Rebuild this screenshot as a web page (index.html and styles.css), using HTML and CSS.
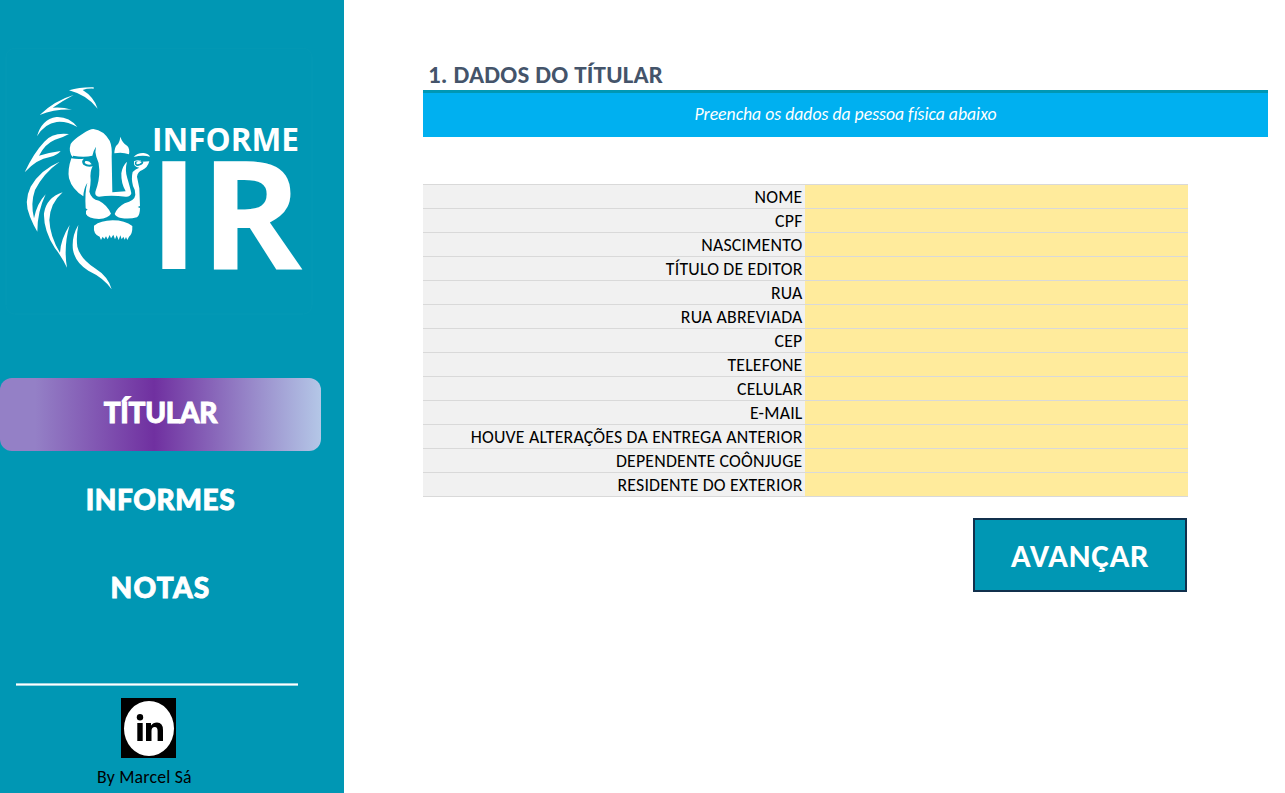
FILE: index.html
```html
<!DOCTYPE html>
<html lang="pt-BR">
<head>
<meta charset="utf-8">
<title>Informe IR</title>
<link rel="stylesheet" href="styles.css">
</head>
<body>
<div class="app">
  <aside class="sidebar">
    <svg class="logo" viewBox="0 0 1032 870" role="img" aria-label="Informe IR">
      <rect class="logo-frame" x="18" y="25" width="918" height="797" rx="26"/>
      <g class="mane">
        <path d="M207 151Q240 141 281 142V146Q262 145 248 150Q281 170 293 206Q261 165 207 151Z"/>
        <path d="M221 165Q165 181 119 225Q165 207 216 209Q185 200 158 203Q185 184 221 165Z"/>
        <path d="M111 289Q125 238 169 231Q207 229 232 261Q200 243 170 246Q135 250 111 289Z"/>
        <path d="M207 282Q157 276 133 305Q100 340 74 397Q110 357 150 351Q172 345 182 333Q145 338 117 347Q135 311 165 299Q190 292 207 282Z"/>
        <path d="M179 365Q120 390 92 440Q70 485 90 530Q100 555 112 575Q112 515 137 463Q111 490 102 535Q91 490 105 450Q130 400 179 365Z"/>
        <path d="M188 457Q139 473 132 520Q130 570 165 625Q185 650 201 683Q190 620 209 555Q182 598 180 638Q150 590 148 540Q150 490 188 457Z"/>
        <path d="M235 555Q214 590 219 630Q226 668 265 692Q312 714 335 748Q325 710 285 685Q240 655 232 620Q228 590 235 555Z"/>
      </g>
      <g class="face" transform="translate(192 240)">
        <path d="M27 112Q12 97 20 72Q28 59 55 42Q77 27 88 27Q119 31 137 62Q145 80 143 110L145 217L185 214Q171 190 172 160Q175 138 189 125Q182 150 190 175Q199 205 202 220Q199 231 185 230Q140 225 105 230Q92 229 94 216Q107 180 106 150Q107 130 97 110Q92 95 96 80Q88 92 85 107Q60 113 27 107Z"/>
        <path d="M22 115Q40 118 60 116Q50 122 58 134Q70 143 86 139Q77 155 80 180Q80 195 76 215Q82 238 105 242Q130 255 141 281Q133 294 105 297Q72 295 66 282V272L71 269L65 265Q62 215 70 188Q59 205 58 229Q24 208 15 175Q10 150 22 115Z"/>
        <path d="M64 123Q76 121 83 133Q71 137 62 129Z"/>
        <path d="M169 50Q175 69 190 78Q198 86 195 103Q175 95 151 100Q152 82 158 76Q167 68 169 50Z"/>
        <path d="M209 111Q220 98 239 99Q254 101 258 110Q236 104 209 111Z"/>
        <path fill-rule="evenodd" d="M210 124Q225 117 235 125L256 124Q251 143 235 150Q221 155 219 170L226 205L228 258L221 261L228 264Q228 285 219 292Q196 298 171 294Q157 291 152 282Q160 262 182 250Q212 242 214 225Q214 208 207 198Q201 175 206 156Q214 147 226 143Q207 141 210 124ZM213 125Q210 137 222 138Q237 135 238 127Q230 119 213 125Z"/>
        <path d="M218 125Q226 120 233 127Q225 135 217 132Z"/>
        <path d="M90 317Q110 302 146 301Q183 301 205 318Q206 342 195 350L190 360L186 351L182 359L178 350L173 358L169 346L164 360L158 346L153 358L148 344L141 355L137 345L131 358L126 349L121 357L116 350L111 360L107 350Q87 343 90 317Z"/>
      </g>
      <text class="logo-name" x="456" y="332" textLength="441" lengthAdjust="spacingAndGlyphs">INFORME</text>
      <text class="logo-ir" y="686"><tspan x="446">I</tspan></text>
      <text class="logo-ir" x="600" y="686" textLength="307" lengthAdjust="spacingAndGlyphs">R</text>
    </svg>
    <nav class="nav">
      <a class="nav-item active">TÍTULAR</a>
      <a class="nav-item informes">INFORMES</a>
      <a class="nav-item notas">NOTAS</a>
    </nav>
    <footer class="credit">
      <div class="rule"></div>
      <svg class="linkedin" viewBox="0 0 55 60" role="img" aria-label="LinkedIn">
        <rect width="55" height="60"/>
        <ellipse cx="28" cy="30.5" rx="25" ry="27.5" fill="#fff"/>
        <circle cx="19" cy="19.2" r="3.2"/>
        <path d="M16.3 25h5.4v18h-5.4zM25 25h5v2.500Q32 24.400 36 24.400Q42 24.400 42 32V43h-5.400V33Q36.600 29 33.800 29Q30.500 29 30.500 33V43H25z"/>
      </svg>
      <p class="author">By Marcel Sá</p>
    </footer>
  </aside>
  <main class="content">
    <h1 class="title">1. DADOS DO TÍTULAR</h1>
    <div class="banner">Preencha os dados da pessoa física abaixo</div>
    <div class="form">
      <div class="row"><label>NOME</label><span class="field"></span></div>
      <div class="row"><label>CPF</label><span class="field"></span></div>
      <div class="row"><label>NASCIMENTO</label><span class="field"></span></div>
      <div class="row"><label>TÍTULO DE EDITOR</label><span class="field"></span></div>
      <div class="row"><label>RUA</label><span class="field"></span></div>
      <div class="row"><label>RUA ABREVIADA</label><span class="field"></span></div>
      <div class="row"><label>CEP</label><span class="field"></span></div>
      <div class="row"><label>TELEFONE</label><span class="field"></span></div>
      <div class="row"><label>CELULAR</label><span class="field"></span></div>
      <div class="row"><label>E-MAIL</label><span class="field"></span></div>
      <div class="row"><label>HOUVE ALTERAÇÕES DA ENTREGA ANTERIOR</label><span class="field"></span></div>
      <div class="row"><label>DEPENDENTE COÔNJUGE</label><span class="field"></span></div>
      <div class="row"><label>RESIDENTE DO EXTERIOR</label><span class="field"></span></div>
    </div>
    <button class="next">AVANÇAR</button>
  </main>
</div>
</body>
</html>
```
FILE: styles.css
```css
* { box-sizing: border-box; }
body { margin: 0; background: #fff; font-family: Carlito, Lato, sans-serif; font-variant-ligatures: none; color: #000; }
.app { display: flex; height: 793px; overflow: hidden; }
.sidebar { width: 344px; flex: none; background: #0097b4; padding-top: 40px; display: flex; flex-direction: column; }
.logo { display: block; width: 344px; height: 290px; flex: none; fill: #fff; }
.logo-frame { fill: none; stroke: #0499b5; stroke-width: 3; }
.logo-name { font: 700 95px "Open Sans", sans-serif; }
.logo-ir { font: 700 455px "Open Sans", sans-serif; }
.nav { display: flex; flex-direction: column; gap: 14.5px; margin-top: 48px; width: 321px; }
.nav-item { height: 73px; display: flex; align-items: center; justify-content: center; padding-bottom: 6px; color: #fff; font-family: Lato, sans-serif; font-weight: 900; font-size: 28px; line-height: 34px; letter-spacing: -0.3px; -webkit-text-stroke: 0.9px #fff; }
.informes { letter-spacing: 0.6px; }
.notas { letter-spacing: 1.2px; }
.active { border-radius: 12px; background: linear-gradient(90deg, #9480c6 0, #9480c6 11%, #7030a0 48%, #b4c7e7 100%); }
.credit { margin-top: 57px; display: flex; flex-direction: column; }
.rule { width: 282px; height: 3px; margin-left: 16px; background: #fff; border: solid #9fd6e2; border-width: 1px 0; }
.linkedin { width: 55px; height: 60px; margin: 12px 0 0 121px; }
.author { margin: 9px 0 0 97px; font-size: 17.8px; line-height: 20px; letter-spacing: 0.2px; }
.content { flex: 1; padding: 60px 17px 0 79px; display: flex; flex-direction: column; }
.title { margin: 0; padding-left: 5px; height: 30px; line-height: 30px; font-size: 25px; font-weight: 700; color: #44546a; letter-spacing: 0.2px; }
.banner { height: 47px; border-top: 3px solid #0097b4; background: #00b0f0; color: #fff; font-size: 17.7px; font-style: italic; line-height: 43px; text-align: center; }
.form { width: 765px; margin-top: 47px; border-top: 1px solid #d9d9d9; }
.row { display: flex; height: 24px; border-bottom: 1px solid #d9d9d9; }
.row label { width: 382px; padding-right: 2.5px; background: #f1f1f1; text-align: right; font-size: 17.8px; line-height: 25px; letter-spacing: 0.2px; white-space: nowrap; }
.field { flex: 1; background: #ffeb9c; }
.next { width: 214px; height: 74px; margin: 21px 0 0 550px; padding: 2px 0 0; border: 2px solid #11304c; background: #0097b4; color: #fff; font: 700 33px Carlito, Lato, sans-serif; letter-spacing: 0.7px; }
```
